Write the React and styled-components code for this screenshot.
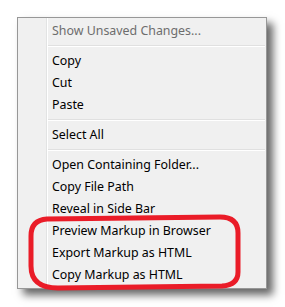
import React from 'react';
import styled, {createGlobalStyle} from "styled-components";

const GlobalStyle = createGlobalStyle`
  html, body {
    margin: 0;
    background: #fff;
  }
  body {
    font-family: "Noto Sans", "Open Sans", sans-serif;
  }
`;

const groups = [
    [{label: 'Show Unsaved Changes...', disabled: true}],
    [{label: 'Copy'}, {label: 'Cut'}, {label: 'Paste'}],
    [{label: 'Select All'}],
    [
        {label: 'Open Containing Folder...'},
        {label: 'Copy File Path'},
        {label: 'Reveal in Side Bar'},
        {label: 'Preview Markup in Browser'},
        {label: 'Export Markup as HTML'},
        {label: 'Copy Markup as HTML'},
    ],
];

const App = () => (
    <Page>
        <GlobalStyle />
        <Menu>
            {groups.map((group, i) => (
                <React.Fragment key={i}>
                    {i > 0 && <Separator />}
                    {group.map(item => (
                        <MenuItem key={item.label} disabled={item.disabled}>
                            {item.label}
                        </MenuItem>
                    ))}
                </React.Fragment>
            ))}
        </Menu>
        <Annotation width="285" height="307" viewBox="0 0 285 307">
            <path
                d="M47 219 L220 217 Q238 217 238 233 L238 272 Q238 285 222 286 L58 288 Q31 288 31 266 L31 236 Q31 220 47 219 Z"
                fill="none"
                stroke="#ea1c28"
                strokeWidth="5"
                strokeLinejoin="round"
            />
        </Annotation>
    </Page>
);


const Page = styled.div`
  position: relative;
  width: 285px;
  height: 307px;
  padding: 17px;
  box-sizing: border-box;
`;


const Menu = styled.div`
  width: 250px;
  box-sizing: border-box;
  padding: 2px 0;
  border: 1px solid #979797;
  background: linear-gradient(to right,
    #f0f0f0 28px, #e2e3e3 28px, #e2e3e3 29px,
    #ffffff 29px, #ffffff 30px, #f0f0f0 30px);
  box-shadow: 6px 6px 8px rgba(0, 0, 0, 0.6);
`;


const MenuItem = styled.div`
  height: 22px;
  line-height: 22px;
  padding-left: 34px;
  font-size: 12.4px;
  white-space: nowrap;
  color: ${p => p.disabled ? '#6d6d6d' : '#000'};
`;


const Separator = styled.div`
  height: 1px;
  margin: 3px 1px 3px 30px;
  background: #e0e0e0;
  border-bottom: 1px solid #fff;
`;


const Annotation = styled.svg`
  position: absolute;
  top: 0;
  left: 0;
  pointer-events: none;
`;

export default App;
